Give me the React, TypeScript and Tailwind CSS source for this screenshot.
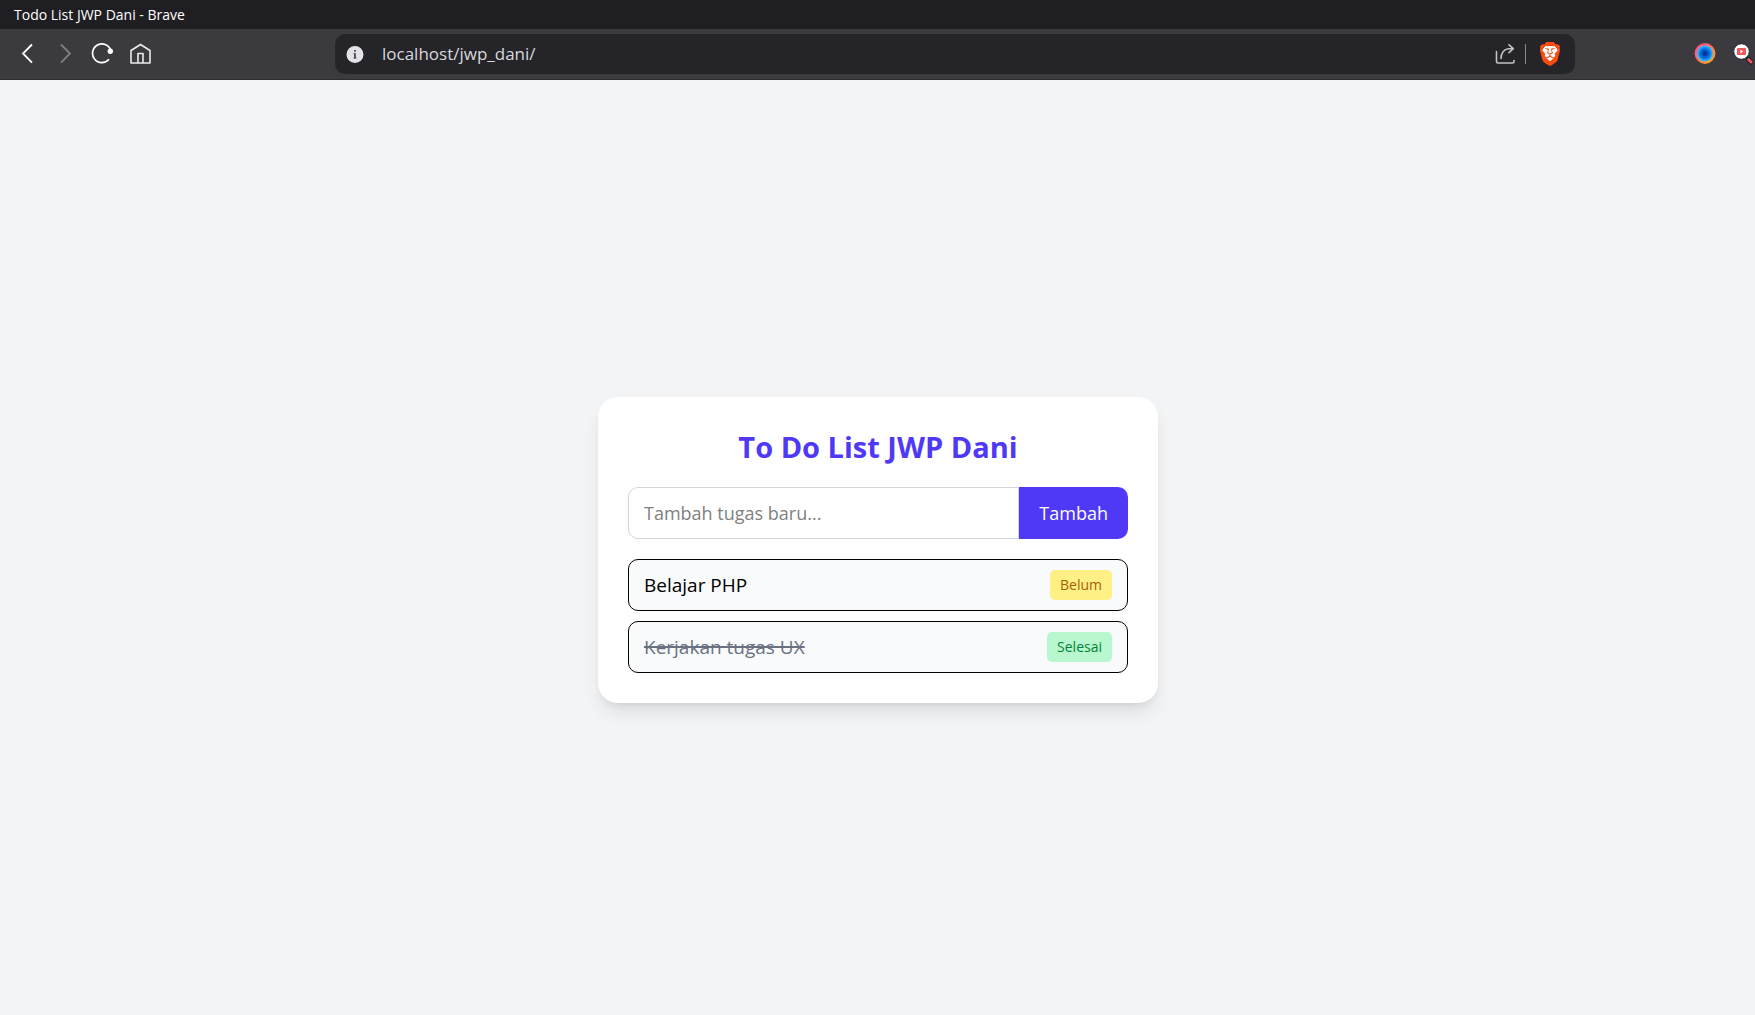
import { useState, type FormEvent } from "react";
import { SiBrave } from "react-icons/si";

type Task = { id: number; title: string; done: boolean };

const initialTasks: Task[] = [
  { id: 1, title: "Belajar PHP", done: false },
  { id: 2, title: "Kerjakan tugas UX", done: true },
];

function BraveIcon() {
  return (
    <svg width="20" height="24" viewBox="0 0 20 24" aria-hidden="true">
      <path d="M5 4h10l3 4-2 8-6 5-6-5-2-8z" fill="#fff" />
      <SiBrave x="-2" y="0" size={24} color="#fb4b12" />
    </svg>
  );
}

function OrbIcon() {
  return (
    <svg width="22" height="22" viewBox="0 0 22 22" aria-hidden="true">
      <defs>
        <linearGradient id="ring" x1="0" y1="0" x2="1" y2="1">
          <stop offset="0" stopColor="#ff3fa0" />
          <stop offset="0.45" stopColor="#ff7058" />
          <stop offset="1" stopColor="#ffb300" />
        </linearGradient>
        <radialGradient id="core">
          <stop offset="0" stopColor="#062a78" />
          <stop offset="0.3" stopColor="#0648b4" />
          <stop offset="0.7" stopColor="#0a84f5" />
          <stop offset="1" stopColor="#45c8ff" />
        </radialGradient>
      </defs>
      <circle cx="11" cy="10.5" r="10.400" fill="url(#ring)" />
      <circle cx="11" cy="10.5" r="8" fill="url(#core)" />
    </svg>
  );
}

function VideoSearchIcon() {
  return (
    <svg width="20" height="22" viewBox="0 0 20 22" aria-hidden="true">
      <path d="M13 14l2.500 2.500" stroke="#17232f" strokeWidth="2.500" />
      <path d="M15.500 16.500l2.500 2.500" stroke="#17232f" strokeWidth="5" strokeLinecap="round" />
      <path d="M15.700 16.700l2.300 2.300" stroke="#f2555a" strokeWidth="3" strokeLinecap="round" />
      <circle cx="8.500" cy="8.500" r="7.800" fill="#fff" stroke="#17232f" strokeWidth="1" />
      <rect x="4" y="5" width="9" height="7" rx="1" fill="#f2555a" />
      <path d="M7.300 6.800v3.400l3-1.700z" fill="#fff" />
    </svg>
  );
}

function BrowserChrome() {
  return (
    <header>
      <div className="flex h-[29px] items-center bg-[#1f1e23] pl-[14px] text-[14px] leading-5 text-white">
        Todo List JWP Dani - Brave
      </div>
      <div className="flex h-[51px] items-center border-b border-[#2d2c31] bg-[#3b3a3f]">
        <nav className="flex w-[335px] shrink-0 items-center gap-[14px] pl-[15px]" aria-label="Navigasi">
          <button type="button" aria-label="Kembali">
            <svg width="24" height="24" viewBox="0 0 24 24" fill="none" stroke="#fff" strokeWidth="1.800">
              <path d="M17 2.500 8 11.500l9 9.200" />
            </svg>
          </button>
          <button type="button" aria-label="Maju" disabled>
            <svg width="24" height="24" viewBox="0 0 24 24" fill="none" stroke="#808085" strokeWidth="1.800">
              <path d="M8 2.500 17 11.500l-9 9.200" />
            </svg>
          </button>
          <button type="button" aria-label="Muat ulang">
            <svg width="24" height="24" viewBox="0 0 24 24" fill="none" stroke="#fff" strokeWidth="1.700">
              <path d="M19.900 9A9.300 9.300 0 1 0 18 17.200" />
              <circle cx="19.300" cy="9.300" r="2.700" fill="#fff" stroke="none" />
            </svg>
          </button>
          <button type="button" aria-label="Beranda">
            <svg width="24" height="24" viewBox="0 0 24 24" fill="none" stroke="#ececee" strokeWidth="1.600" strokeLinejoin="round">
              <path d="M2 8.500 11.500 2.500l9.500 6V21H2z" />
              <path d="M9 21v-9.500h5V21" />
            </svg>
          </button>
        </nav>
        <div className="flex h-10 flex-1 items-center rounded-[10px] bg-[#252429] pr-[15px] pl-[11px]">
          <svg width="18" height="18" viewBox="0 0 18 18" aria-hidden="true" className="shrink-0">
            <circle cx="9" cy="9.500" r="8.500" fill="#e4e3e8" />
            <path d="M9 5v1.800M9 8.200v5" stroke="#4a494f" strokeWidth="1.800" fill="none" />
            <path d="M7.500 8.800H9M7.500 13h3" stroke="#4a494f" strokeWidth="1" fill="none" />
          </svg>
          <input
            type="text"
            aria-label="Alamat"
            defaultValue="localhost/jwp_dani/"
            className="ml-[18px] min-w-0 flex-1 bg-transparent text-[17px] leading-6 text-[#d8d8dc] outline-none"
          />
          <button type="button" aria-label="Bagikan">
            <svg width="22" height="22" viewBox="0 0 22 22" fill="none" stroke="#c2c1c6" strokeWidth="1.600" strokeLinecap="round" strokeLinejoin="round">
              <path d="M2.500 8.500v10a1.500 1.500 0 0 0 1.500 1.500h14.500a1.500 1.500 0 0 0 1.500-1.500v-1" />
              <path d="M7 15.500c0-5.500 3-9.500 7.500-9.800h4.500M15 1.800 19.300 5.700 15 9.700" />
            </svg>
          </button>
          <span className="mr-[14px] ml-[9px] h-5 w-px bg-[#8a898e]" />
          <button type="button" aria-label="Brave Shields">
            <BraveIcon />
          </button>
        </div>
        <div className="flex w-[180px] shrink-0 items-center justify-end gap-[17px] pr-[2px]">
          <button type="button" aria-label="Ekstensi warna">
            <OrbIcon />
          </button>
          <button type="button" aria-label="Ekstensi video">
            <VideoSearchIcon />
          </button>
        </div>
      </div>
    </header>
  );
}

function TaskRow({ task }: { task: Task }) {
  return (
    <li className="flex h-[52px] items-center justify-between rounded-[10px] border border-black bg-gray-50 px-[15px]">
      <span className={task.done ? "text-gray-500 line-through decoration-2" : "text-black"}>{task.title}</span>
      <span
        className={
          task.done
            ? "rounded-[5px] bg-green-200 px-[10px] py-[5px] text-[14px] leading-5 text-green-700"
            : "rounded-[5px] bg-yellow-200 px-[10px] py-[5px] text-[14px] leading-5 text-yellow-700"
        }
      >
        {task.done ? "Selesai" : "Belum"}
      </span>
    </li>
  );
}

export default function App() {
  const [tasks, setTasks] = useState(initialTasks);
  const [title, setTitle] = useState("");

  const addTask = (event: FormEvent) => {
    event.preventDefault();
    if (!title.trim()) return;
    setTasks([...tasks, { id: tasks.length + 1, title: title.trim(), done: false }]);
    setTitle("");
  };

  return (
    <div className="flex min-h-screen flex-col bg-gray-100 font-['Open_Sans','Noto_Sans',sans-serif]">
      <BrowserChrome />
      <main className="flex flex-1 items-center justify-center pt-[5px] pl-px">
        <section className="w-full max-w-[560px] rounded-[20px] bg-white p-[30px] text-[19px] leading-[30px] shadow-[0_12px_19px_-4px_rgba(0,0,0,0.1),0_5px_8px_-5px_rgba(0,0,0,0.1)]">
          <h1 className="mb-5 text-center text-[29px] leading-10 font-bold text-indigo-600">To Do List JWP Dani</h1>
          <form onSubmit={addTask} className="mb-5 flex h-[52px] text-[18px]">
            <input
              type="text"
              aria-label="Tugas baru"
              placeholder="Tambah tugas baru..."
              value={title}
              onChange={(event) => setTitle(event.target.value)}
              className="min-w-0 flex-1 rounded-l-[10px] border border-gray-300 px-[15px] outline-none placeholder:text-[#808080]"
            />
            <button type="submit" className="rounded-r-[10px] bg-indigo-600 px-5 text-white">
              Tambah
            </button>
          </form>
          <ul className="flex flex-col gap-[10px]">
            {tasks.map((task) => (
              <TaskRow key={task.id} task={task} />
            ))}
          </ul>
        </section>
      </main>
    </div>
  );
}
